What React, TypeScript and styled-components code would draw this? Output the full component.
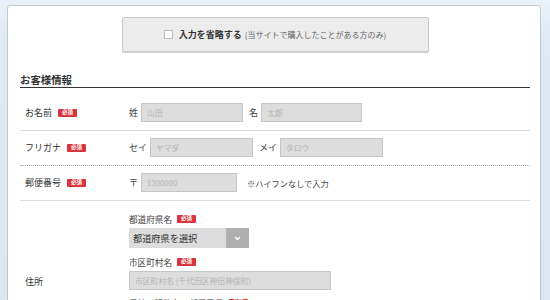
import React from "react"
import styled, { createGlobalStyle } from "styled-components"

const Global = createGlobalStyle`
  html, body {
    margin: 0;
    padding: 0;
    background: linear-gradient(180deg, #eaf1f8 0px, #dfe9f4 40px, #dbe6f3 100%);
    font-family: "Noto Sans CJK JP", "Noto Sans", sans-serif;
    color: #333;
  }
  body { height: 300px; overflow: hidden; }
`

const Page = styled.div`
  padding: 5px 9px 0 7px;
`

const Card = styled.div`
  background: #fff;
  border: 1px solid #c4c8cc;
  border-radius: 3px 3px 0 0;
  padding: 11px 10px 0 12px;
  min-height: 420px;
`

const SkipButton = styled.div`
  width: 307px;
  height: 35px;
  margin: 0 auto;
  box-sizing: border-box;
  background: #ececec;
  border: 1px solid #c9c9c9;
  border-radius: 2px;
  box-shadow: 0 1px 1px rgba(0, 0, 0, 0.18);
  display: flex;
  align-items: center;
  justify-content: center;
  gap: 3px;
`

const CheckBox = styled.span`
  width: 7px;
  height: 7px;
  background: #fff;
  border: 1px solid #bcbcbc;
  margin-right: 3px;
`

const SkipText = styled.span`
  font-size: 9px;
  font-weight: 700;
  color: #333;
`

const SkipNote = styled.span`
  font-size: 8px;
  color: #666;
`

const Heading = styled.h2`
  margin: 21px 0 8px;
  font-size: 10.4px;
  line-height: 14px;
  font-weight: 700;
  color: #333;
  border-bottom: 1px solid #333;
`

const Row = styled.div<{ $line: "solid" | "dotted"; $pad?: string }>`
  display: grid;
  grid-template-columns: 109px 1fr;
  align-items: center;
  padding: ${(p) => p.$pad ?? "7px 0 8px"};
  border-bottom: 1px ${(p) => p.$line} ${(p) => (p.$line === "solid" ? "#dcdcdc" : "#a8a8a8")};
`

const Label = styled.div`
  display: flex;
  align-items: center;
  gap: 6px;
  padding-left: 5px;
  font-size: 9px;
  line-height: 12px;
  color: #333;
`

const Badge = styled.span`
  display: inline-flex;
  align-items: center;
  justify-content: center;
  width: 19px;
  height: 8px;
  background: #d8343b;
  border-radius: 1px;
  color: #fff;
  font-size: 5.5px;
  font-weight: 700;
  line-height: 1;
`

const Fields = styled.div`
  display: flex;
  align-items: center;
`

const Prefix = styled.span<{ $gap: number }>`
  font-size: 9px;
  color: #444;
  margin-right: ${(p) => p.$gap}px;
`

const Input = styled.div<{ $w: number; $after?: number }>`
  width: ${(p) => p.$w}px;
  height: 19px;
  box-sizing: border-box;
  background: #dddddd;
  border: 1px solid #c6c6c6;
  margin-right: ${(p) => p.$after ?? 0}px;
  padding-left: 5px;
  display: flex;
  align-items: center;
  font-size: 7.8px;
  color: #b4b4b4;
  white-space: nowrap;
  overflow: hidden;
`

const Note = styled.span`
  font-size: 8.2px;
  color: #444;
`

const Stack = styled.div`
  display: flex;
  flex-direction: column;
  align-items: flex-start;
  padding-bottom: 20px;
`

const SubLabel = styled.div<{ $top?: number }>`
  display: flex;
  align-items: center;
  gap: 5px;
  font-size: 8.6px;
  line-height: 12px;
  color: #444;
  margin-top: ${(p) => p.$top ?? 0}px;
  margin-bottom: 3px;
`

const Select = styled.div`
  width: 120px;
  height: 20px;
  display: flex;
  background: #dcdcdc;
`

const SelectText = styled.span`
  flex: 1;
  padding-left: 4px;
  font-size: 9.2px;
  line-height: 20px;
  color: #333;
`

const Arrow = styled.span`
  width: 23px;
  background: #afafaf;
  display: flex;
  align-items: center;
  justify-content: center;
`

export default function App() {
  return (
    <>
      <Global />
      <Page>
        <Card>
          <SkipButton>
            <CheckBox />
            <SkipText>入力を省略する</SkipText>
            <SkipNote>(当サイトで購入したことがある方のみ)</SkipNote>
          </SkipButton>

          <Heading>お客様情報</Heading>

          <Row $line="solid">
            <Label>
              お名前<Badge>必須</Badge>
            </Label>
            <Fields>
              <Prefix $gap={3}>姓</Prefix>
              <Input $w={102} $after={6}>山田</Input>
              <Prefix $gap={3}>名</Prefix>
              <Input $w={101}>太郎</Input>
            </Fields>
          </Row>

          <Row $line="dotted">
            <Label>
              フリガナ<Badge>必須</Badge>
            </Label>
            <Fields>
              <Prefix $gap={3}>セイ</Prefix>
              <Input $w={103} $after={6}>ヤマダ</Input>
              <Prefix $gap={3}>メイ</Prefix>
              <Input $w={103}>タロウ</Input>
            </Fields>
          </Row>

          <Row $line="solid">
            <Label>
              郵便番号<Badge>必須</Badge>
            </Label>
            <Fields>
              <Prefix $gap={3}>〒</Prefix>
              <Input $w={96} $after={10}>1300000</Input>
              <Note>※ハイフンなしで入力</Note>
            </Fields>
          </Row>

          <Row $line="solid" $pad="12px 0 12px">
            <Label>住所</Label>
            <Stack>
              <SubLabel>
                都道府県名<Badge>必須</Badge>
              </SubLabel>
              <Select>
                <SelectText>都道府県を選択</SelectText>
                <Arrow>
                  <svg width="7" height="5" viewBox="0 0 7 5">
                    <path d="M1 1l2.5 2.5L6 1" fill="none" stroke="#fff" strokeWidth="1.3" />
                  </svg>
                </Arrow>
              </Select>
              <SubLabel $top={8}>
                市区町村名<Badge>必須</Badge>
              </SubLabel>
              <Input $w={202}>市区町村名 (千代田区神田神保町)</Input>
              <SubLabel $top={7}>
                番地・建物名・部屋番号<Badge>必須</Badge>
              </SubLabel>
              <Input $w={202}>番地・建物名</Input>
            </Stack>
          </Row>
        </Card>
      </Page>
    </>
  )
}
